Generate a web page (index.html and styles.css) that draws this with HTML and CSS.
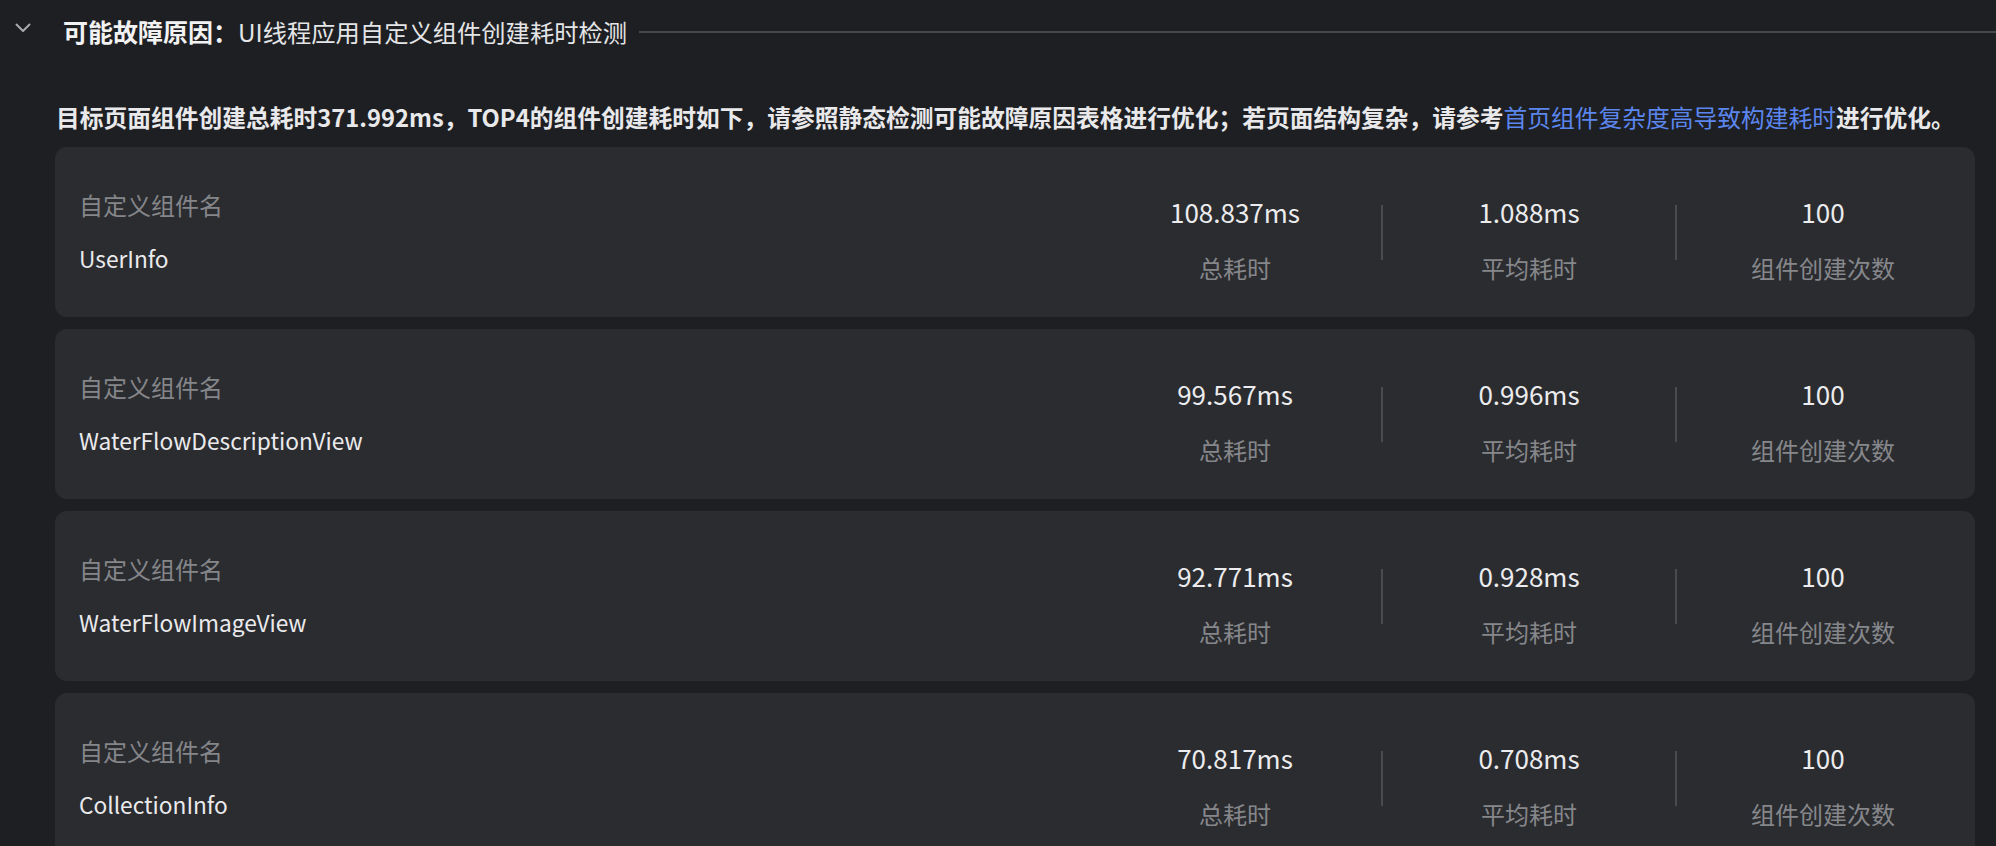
FILE: index.html
```html
<!DOCTYPE html>
<html lang="zh-CN">
<head>
<meta charset="utf-8">
<title>UI线程应用自定义组件创建耗时检测</title>
<link rel="stylesheet" href="styles.css">
</head>
<body>
<div class="page">
  <div class="header">
    <svg class="chevron" width="16" height="10" viewBox="0 0 16 10"><path d="M1.5 1.5 L8 8 L14.5 1.5" fill="none" stroke="#a9aaad" stroke-width="2" stroke-linecap="round" stroke-linejoin="round"/></svg>
    <div class="title"><span class="title-strong">可能故障原因：</span>UI线程应用自定义组件创建耗时检测</div>
    <div class="rule"></div>
  </div>
  <p class="desc">目标页面组件创建总耗时371.992ms，TOP4的组件创建耗时如下，请参照静态检测可能故障原因表格进行优化；若页面结构复杂，请参考<span class="link">首页组件复杂度高导致构建耗时</span>进行优化。</p>
  <div class="cards">
    <div class="card">
      <div class="name-block">
        <div class="label">自定义组件名</div>
        <div class="name">UserInfo</div>
      </div>
      <div class="stat"><div class="num">108.837ms</div><div class="cap">总耗时</div></div>
      <div class="divider"></div>
      <div class="stat"><div class="num">1.088ms</div><div class="cap">平均耗时</div></div>
      <div class="divider"></div>
      <div class="stat"><div class="num">100</div><div class="cap">组件创建次数</div></div>
    </div>
    <div class="card">
      <div class="name-block">
        <div class="label">自定义组件名</div>
        <div class="name">WaterFlowDescriptionView</div>
      </div>
      <div class="stat"><div class="num">99.567ms</div><div class="cap">总耗时</div></div>
      <div class="divider"></div>
      <div class="stat"><div class="num">0.996ms</div><div class="cap">平均耗时</div></div>
      <div class="divider"></div>
      <div class="stat"><div class="num">100</div><div class="cap">组件创建次数</div></div>
    </div>
    <div class="card">
      <div class="name-block">
        <div class="label">自定义组件名</div>
        <div class="name">WaterFlowImageView</div>
      </div>
      <div class="stat"><div class="num">92.771ms</div><div class="cap">总耗时</div></div>
      <div class="divider"></div>
      <div class="stat"><div class="num">0.928ms</div><div class="cap">平均耗时</div></div>
      <div class="divider"></div>
      <div class="stat"><div class="num">100</div><div class="cap">组件创建次数</div></div>
    </div>
    <div class="card">
      <div class="name-block">
        <div class="label">自定义组件名</div>
        <div class="name">CollectionInfo</div>
      </div>
      <div class="stat"><div class="num">70.817ms</div><div class="cap">总耗时</div></div>
      <div class="divider"></div>
      <div class="stat"><div class="num">0.708ms</div><div class="cap">平均耗时</div></div>
      <div class="divider"></div>
      <div class="stat"><div class="num">100</div><div class="cap">组件创建次数</div></div>
    </div>
  </div>
</div>
</body>
</html>
```
FILE: styles.css
```css
html, body {
  margin: 0;
  padding: 0;
  background: #1e1f22;
  height: 846px;
  overflow: hidden;
}
body {
  font-family: "Noto Sans CJK SC", "Noto Sans", sans-serif;
  color: #e6e6e8;
}
.page {
  display: flex;
  flex-direction: column;
}
.header {
  height: 62px;
  display: flex;
  align-items: center;
  padding-left: 15px;
}
.chevron {
  flex: none;
  margin-top: -6px;
  margin-right: 32px;
}
.title {
  font-size: 24.3px;
  line-height: 34px;
  color: #e4e5e7;
  white-space: nowrap;
}
.title-strong {
  font-size: 25px;
  font-weight: 700;
  color: #f2f2f3;
}
.rule {
  flex: 1;
  height: 2px;
  background: #46474b;
  margin-left: 12px;
  margin-top: 2px;
}
.desc {
  margin: 40px 0 0 0;
  padding-left: 56px;
  font-size: 23.75px;
  line-height: 30px;
  font-weight: 700;
  color: #e9e9eb;
  white-space: nowrap;
}
.link {
  color: #5b86ee;
  font-weight: 400;
}
.cards {
  display: flex;
  flex-direction: column;
  gap: 12px;
  margin-top: 15px;
  padding: 0 21px 0 55px;
}
.card {
  flex: none;
  height: 170px;
  background: #2b2c30;
  border-radius: 12px;
  display: flex;
  align-items: center;
  padding: 0 6px 0 24px;
}
.name-block {
  flex: 1;
  display: flex;
  flex-direction: column;
  gap: 24px;
}
.label {
  font-size: 24px;
  line-height: 30px;
  color: #85868a;
}
.name {
  font-size: 22.7px;
  line-height: 30px;
  color: #eaeaec;
}
.stat {
  width: 292px;
  display: flex;
  flex-direction: column;
  align-items: center;
  padding-top: 16px;
}
.num {
  font-size: 26px;
  line-height: 34px;
  color: #ececee;
}
.cap {
  margin-top: 22px;
  font-size: 24px;
  line-height: 34px;
  color: #86878b;
}
.divider {
  width: 2px;
  height: 55px;
  background: #4a4b4f;
}
```
